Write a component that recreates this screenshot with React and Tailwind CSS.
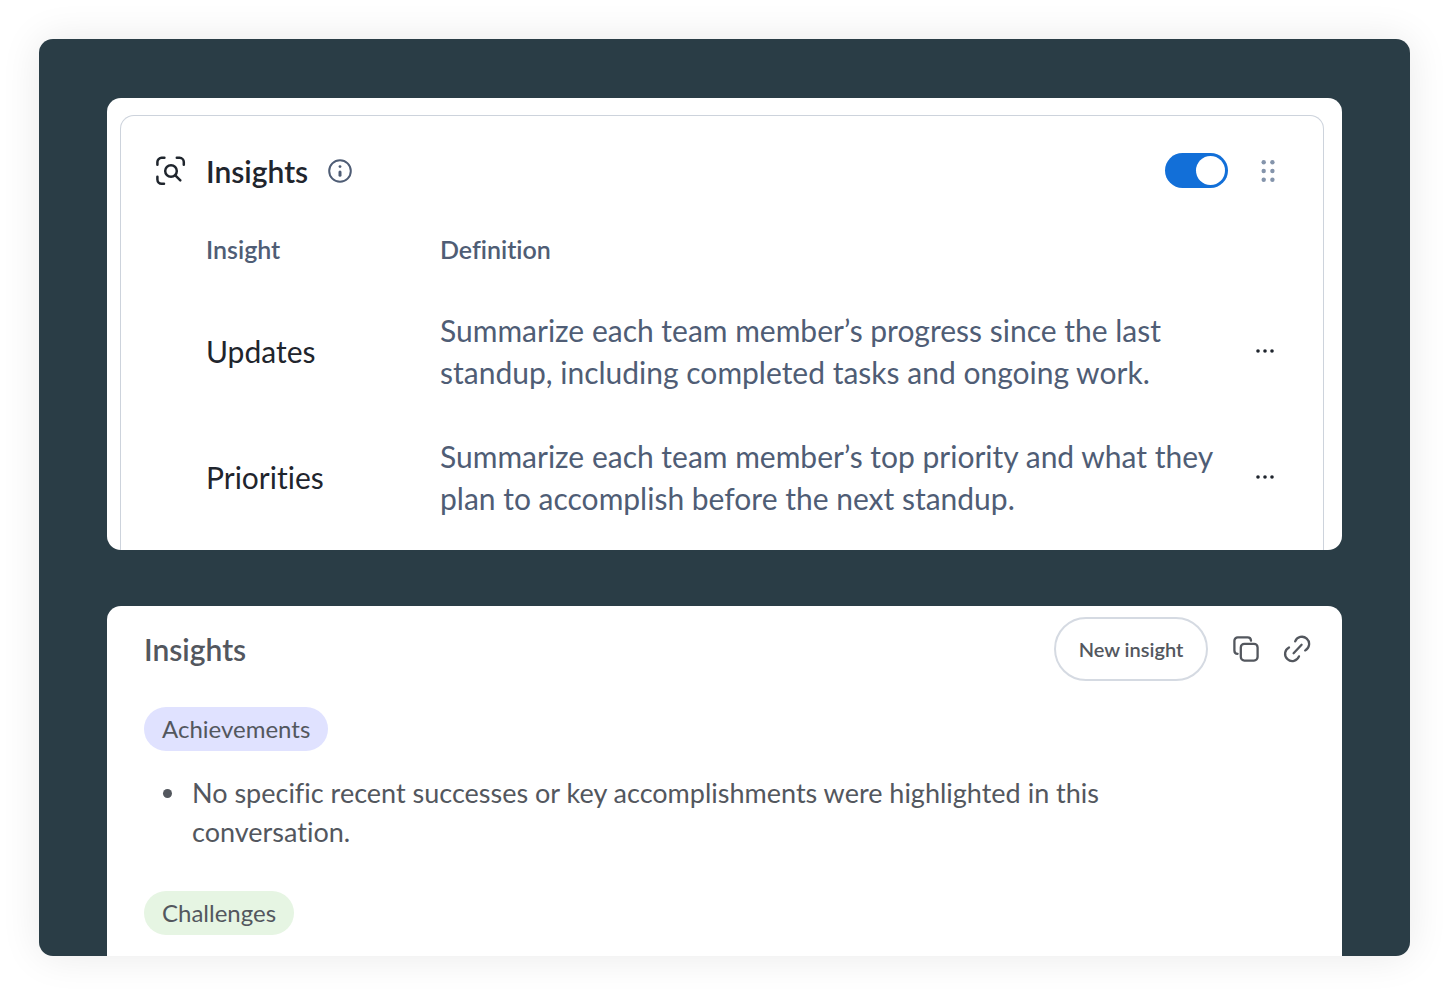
import React from 'react';

const insights = [
  {
    name: 'Updates',
    definition:
      'Summarize each team member’s progress since the last standup, including completed tasks and ongoing work.',
  },
  {
    name: 'Priorities',
    definition:
      'Summarize each team member’s top priority and what they plan to accomplish before the next standup.',
  },
];

const ScanIcon = () => (
  <svg
    className="size-[30px] shrink-0"
    viewBox="0 0 30 30"
    fill="none"
    stroke="currentColor"
    strokeWidth="2.5"
    strokeLinecap="round"
    strokeLinejoin="round"
    aria-hidden="true"
  >
    <path d="M1.4 8.8V6a4.2 4.2 0 0 1 4.2-4.2h2.8" />
    <path d="M20.8 1.8h2.8A4.2 4.2 0 0 1 27.8 6v2.8" />
    <path d="M1.4 20.8v2.8a4.2 4.2 0 0 0 4.2 4.2h2.4" />
    <circle cx="15" cy="15" r="5.8" />
    <path d="m19.3 19.3 5 5" />
  </svg>
);

const InfoIcon = () => (
  <svg className="size-6" viewBox="0 0 24 24" fill="none" stroke="currentColor" aria-hidden="true">
    <circle cx="12" cy="12" r="10.8" strokeWidth="2" />
    <circle cx="12" cy="7.6" r="1.4" fill="currentColor" stroke="none" />
    <path d="M12 13v3.2" strokeWidth="3" strokeLinecap="round" />
  </svg>
);

const GripIcon = () => (
  <svg className="h-6 w-4" viewBox="0 0 16 24" fill="currentColor" aria-hidden="true">
    {[3.3, 12, 20.7].map((y) => (
      <React.Fragment key={y}>
        <circle cx="3.7" cy={y} r="2.2" />
        <circle cx="12.4" cy={y} r="2.2" />
      </React.Fragment>
    ))}
  </svg>
);

const DotsIcon = () => (
  <svg className="h-4 w-5" viewBox="0 0 20 16" fill="currentColor" aria-hidden="true">
    <circle cx="3" cy="8" r="1.8" />
    <circle cx="10" cy="8" r="1.8" />
    <circle cx="17" cy="8" r="1.8" />
  </svg>
);

const CopyIcon = () => (
  <svg
    className="size-7"
    viewBox="0 0 28 28"
    fill="none"
    stroke="currentColor"
    strokeWidth="2.3"
    strokeLinecap="round"
    aria-hidden="true"
  >
    <rect x="8.8" y="8.8" width="16.8" height="16.8" rx="3.6" />
    <path d="M5.6 18.8A3.4 3.4 0 0 1 2.4 15.4V5.8a3.4 3.4 0 0 1 3.4-3.4h9.8a3.4 3.4 0 0 1 3.4 3.2" />
  </svg>
);

const LinkIcon = () => (
  <svg
    className="size-7"
    viewBox="0 0 28 28"
    fill="none"
    stroke="currentColor"
    strokeWidth="2.3"
    strokeLinecap="round"
    aria-hidden="true"
  >
    <path d="M12.2 6.4A7.2 7.2 0 1 1 22.2 15.4" />
    <path d="M6 12.4A7.2 7.2 0 1 0 16 21.4" />
    <path d="m10.6 18.2 8-8.4" />
  </svg>
);

const InsightSettings = () => (
  <section className="overflow-hidden rounded-[14px] bg-white pt-[17px] pr-[18px] pl-[13px]">
    <div className="rounded-t-[14px] border border-b-0 border-[#cdd3dc] pt-9 pr-10 pb-[10px] pl-[35px]">
      <div className="flex h-[37px] items-center">
        <span className="text-[#1f252d]">
          <ScanIcon />
        </span>
        <h2 className="ml-5 text-[30px] leading-9 font-semibold text-[#1f252d]">Insights</h2>
        <button type="button" aria-label="About insights" className="ml-5 text-[#4f5d75]">
          <InfoIcon />
        </button>
        <input
          type="checkbox"
          role="switch"
          defaultChecked
          aria-label="Enable insights"
          className="ml-auto flex h-[35px] w-[63px] appearance-none items-center rounded-full bg-[#a3adbb] px-[3px] before:size-[29px] before:rounded-full before:bg-white checked:justify-end checked:bg-[#126fd8]"
        />
        <button type="button" aria-label="Reorder" className="mr-[7px] ml-8 text-[#8494ab]">
          <GripIcon />
        </button>
      </div>

      <table className="mt-[21px] ml-[50px] w-[calc(100%-50px)] table-fixed text-left">
        <thead>
          <tr className="h-[78px] text-[25px] leading-8 text-[#4f5d75]">
            <th scope="col" className="w-[234px] font-semibold">Insight</th>
            <th scope="col" className="font-semibold">Definition</th>
            <th scope="col" className="w-[46px]" aria-label="Actions"></th>
          </tr>
        </thead>
        <tbody>
          {insights.map((insight) => (
            <tr key={insight.name} className="text-[30px] leading-[42px]">
              <th scope="row" className="font-normal text-[#1f252d]">{insight.name}</th>
              <td className="py-[21px] text-[#4f5d75]">{insight.definition}</td>
              <td className="pr-2 text-[#1f252d]">
                <button type="button" aria-label={`${insight.name} options`} className="ml-auto block">
                  <DotsIcon />
                </button>
              </td>
            </tr>
          ))}
        </tbody>
      </table>
    </div>
  </section>
);

const InsightResults = () => (
  <section className="rounded-t-[14px] bg-white pt-[11px] pr-[31px] pb-[21px] pl-[37px] text-[#53575e]">
    <div className="flex items-center">
      <h2 className="mr-auto text-[30px] leading-9 font-semibold">Insights</h2>
      <button
        type="button"
        className="h-16 w-[154px] rounded-full border-2 border-[#d5dae2] text-[20px] font-semibold"
      >
        New insight
      </button>
      <button type="button" aria-label="Copy" className="ml-6">
        <CopyIcon />
      </button>
      <button type="button" aria-label="Copy link" className="ml-[23px]">
        <LinkIcon />
      </button>
    </div>

    <h3 className="mt-[26px] flex h-11 w-fit items-center rounded-full bg-[#e0e2ff] px-[18px] text-[24px]">
      Achievements
    </h3>
    <ul className="mt-[22px] mr-[100px] pl-[19px] text-[27px] leading-[39px]">
      <li className="flex gap-5 before:mt-4 before:size-[9px] before:shrink-0 before:rounded-full before:bg-current">
        No specific recent successes or key accomplishments were highlighted in this conversation.
      </li>
    </ul>
    <h3 className="mt-10 flex h-11 w-fit items-center rounded-full bg-[#e6f5e3] px-[18px] text-[24px]">
      Challenges
    </h3>
  </section>
);

export default function App() {
  return (
    <div className="bg-white p-[39px] font-['Lato','Liberation_Sans',sans-serif] [font-variant-ligatures:no-common-ligatures]">
      <main className="flex flex-col gap-14 overflow-hidden rounded-[14px] bg-[#2a3d46] px-[68px] pt-[59px] shadow-[0_0_40px_rgba(0,0,0,0.09)]">
        <InsightSettings />
        <InsightResults />
      </main>
    </div>
  );
}
